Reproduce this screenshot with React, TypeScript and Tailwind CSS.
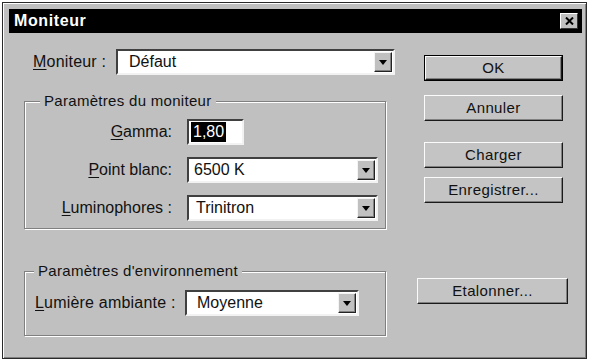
import React from 'react';

const font = "font-['Liberation_Sans',Arial,sans-serif]";

function Arrow() {
  return (
    <div className="flex w-[18px] items-center justify-center border border-t-[#f4f4f4] border-l-[#f4f4f4] border-b-[#222] border-r-[#222] bg-[#c0c0c0] shadow-[inset_-1px_-1px_0_#808080]">
      <svg width="8" height="5" viewBox="0 0 8 5">
        <polygon points="0,0 8,0 4,5" fill="#000" />
      </svg>
    </div>
  );
}

function Select({ value, width, pl }: { value: string; width: string; pl: string }) {
  return (
    <div className={`flex h-[26px] ${width} border-2 border-t-[#404040] border-l-[#404040] border-b-[#f2f2f2] border-r-[#f2f2f2] bg-white p-[1px]`}>
      <div className={`flex flex-1 items-center ${pl} text-[16px] text-[#111]`}>{value}</div>
      <Arrow />
    </div>
  );
}

function Button({ label, isDefault, width, ml }: { label: string; isDefault?: boolean; width: string; ml: string }) {
  return (
    <div className={`${ml} ${width} h-[26px] ${isDefault ? 'border border-black' : ''}`}>
      <div className="flex h-full items-center justify-center border border-t-[#fbfbfb] border-l-[#fbfbfb] border-b-[#1a1a1a] border-r-[#1a1a1a] bg-[#c4c4c4] text-[15px] tracking-[0.4px] text-[#111] shadow-[inset_-1px_-1px_0_#808080]">
        {label}
      </div>
    </div>
  );
}

function Group({ title, children, h, legendLeft }: { title: string; children: React.ReactNode; h: string; legendLeft: string }) {
  return (
    <div className={`relative w-[362px] ${h} border border-[#808080] shadow-[1px_1px_0_#fff,inset_1px_1px_0_#fff]`}>
      <span className={`absolute top-[-10px] ${legendLeft} bg-[#c0c0c0] px-[4px] text-[15px] leading-[18px] tracking-[0.3px] text-[#111]`}>
        {title}
      </span>
      {children}
    </div>
  );
}

export default function App() {
  return (
    <div className={`h-[362px] w-[589px] bg-white pl-[2px] pt-[2px] ${font}`}>
      <div className="h-[357px] w-[585px] border border-[#2a2a2a] bg-[#c0c0c0] shadow-[inset_1px_1px_0_#fff,inset_-1px_-1px_0_#808080]">
        {/* title bar */}
        <div className="ml-[6px] mt-[6px] flex h-[24px] w-[573px] items-center justify-between bg-black pl-[5px] pr-[4px]">
          <span className="text-[16px] font-bold tracking-[0.6px] text-white">Moniteur</span>
          <div className="flex h-[16px] w-[18px] items-center justify-center border border-t-white border-l-white border-b-[#333] border-r-[#333] bg-[#c0c0c0]">
            <svg width="9" height="8" viewBox="0 0 9 8">
              <path d="M1 0.5 L8 7.5 M8 0.5 L1 7.5" stroke="#000" strokeWidth="2" />
            </svg>
          </div>
        </div>

        <div className="flex pl-[21px] pt-[16px]">
          {/* left column */}
          <div className="w-[371px]">
            <div className="flex h-[26px] items-center">
              <span className="ml-[9px] w-[83px] text-[16px] tracking-[0.2px] text-[#111]">
                <span className="underline underline-offset-2">M</span>oniteur :
              </span>
              <Select value="Défaut" width="w-[279px]" pl="pl-[10px]" />
            </div>

            <div className="mt-[26px]">
              <Group title="Paramètres du moniteur" h="h-[128px]" legendLeft="left-[15px]">
                <div className="flex flex-col gap-[12px] pt-[17px]">
                  <div className="flex h-[26px] items-center">
                    <span className="w-[148px] pr-[1px] text-right text-[16px] text-[#111]">
                      <span className="underline underline-offset-2">G</span>amma:
                    </span>
                    <div className="ml-[14px] flex h-[26px] w-[57px] items-center border-2 border-t-[#404040] border-l-[#404040] border-b-[#f2f2f2] border-r-[#f2f2f2] bg-white pl-[2px]">
                      <span className="bg-black px-[2px] text-[16px] leading-[20px] text-white">1,80</span>
                    </div>
                  </div>
                  <div className="flex h-[26px] items-center">
                    <span className="w-[148px] pr-[1px] text-right text-[16px] text-[#111]">
                      <span className="underline underline-offset-2">P</span>oint blanc:
                    </span>
                    <div className="ml-[14px]">
                      <Select value="6500 K" width="w-[191px]" pl="pl-[4px]" />
                    </div>
                  </div>
                  <div className="flex h-[26px] items-center">
                    <span className="w-[148px] pr-[1px] text-right text-[16px] text-[#111]">
                      <span className="underline underline-offset-2">L</span>uminophores :
                    </span>
                    <div className="ml-[14px]">
                      <Select value="Trinitron" width="w-[191px]" pl="pl-[6px]" />
                    </div>
                  </div>
                </div>
              </Group>
            </div>

            <div className="mt-[42px]">
              <Group title="Paramètres d'environnement" h="h-[65px]" legendLeft="left-[9px]">
                <div className="flex h-[26px] items-center pl-[10px] pt-[0px] mt-[18px]">
                  <span className="w-[150px] text-[16px] tracking-[0.2px] text-[#111]">
                    <span className="underline underline-offset-2">L</span>umière ambiante :
                  </span>
                  <Select value="Moyenne" width="w-[174px]" pl="pl-[9px]" />
                </div>
              </Group>
            </div>
          </div>

          {/* right column */}
          <div className="ml-[22px] flex flex-col pt-[6px]">
            <Button label="OK" isDefault width="w-[139px]" ml="ml-[7px]" />
            <div className="mt-[14px]">
              <Button label="Annuler" width="w-[139px]" ml="ml-[7px]" />
            </div>
            <div className="mt-[21px]">
              <Button label="Charger" width="w-[139px]" ml="ml-[7px]" />
            </div>
            <div className="mt-[9px]">
              <Button label="Enregistrer..." width="w-[139px]" ml="ml-[7px]" />
            </div>
            <div className="mt-[75px]">
              <Button label="Etalonner..." width="w-[151px]" ml="ml-0" />
            </div>
          </div>
        </div>
      </div>
    </div>
  );
}
